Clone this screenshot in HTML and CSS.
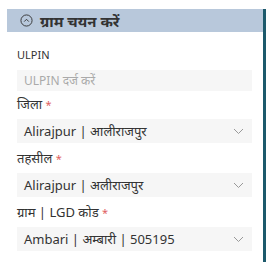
FILE: index.html
```html
<!DOCTYPE html>
<html lang="hi">
<head>
  <meta charset="UTF-8">
  <title>ग्राम चयन</title>
  <link rel="stylesheet" href="styles.css">
</head>
<body>

<div class="panel">
  <!-- Header -->
  <div class="panel-head">
    <svg class="head-icon" width="13" height="13" viewBox="0 0 14 14">
      <circle cx="7" cy="7" r="6" fill="none" stroke="#333" stroke-width="1"/>
      <path d="M4.5 8.2 L7 5.7 L9.5 8.2" fill="none" stroke="#333" stroke-width="1"/>
    </svg>
    <span>ग्राम चयन करें</span>
  </div>

  <div class="panel-body">
    <div class="field field-first">
      <label class="lbl lbl-small">ULPIN</label>
      <input class="inp" type="text" placeholder="ULPIN दर्ज करें">
    </div>

    <div class="field">
      <label class="lbl">जिला <span class="req">*</span></label>
      <div class="sel">
        <span>Alirajpur | आलीराजपुर</span>
        <svg class="chev" width="11" height="7" viewBox="0 0 11 7"><path d="M1 1 L5.5 5.5 L10 1" fill="none" stroke="#999" stroke-width="1"/></svg>
      </div>
    </div>

    <div class="field">
      <label class="lbl">तहसील <span class="req">*</span></label>
      <div class="sel">
        <span>Alirajpur | अलीराजपुर</span>
        <svg class="chev" width="11" height="7" viewBox="0 0 11 7"><path d="M1 1 L5.5 5.5 L10 1" fill="none" stroke="#999" stroke-width="1"/></svg>
      </div>
    </div>

    <div class="field">
      <label class="lbl">ग्राम | LGD कोड <span class="req">*</span></label>
      <div class="sel">
        <span>Ambari | अम्बारी | 505195</span>
        <svg class="chev" width="11" height="7" viewBox="0 0 11 7"><path d="M1 1 L5.5 5.5 L10 1" fill="none" stroke="#999" stroke-width="1"/></svg>
      </div>
    </div>
  </div>
</div>

</body>
</html>
```

FILE: styles.css
```css
* {
  box-sizing: border-box;
  font-family: "Noto Sans", sans-serif;
}
body {
  margin: 0;
  background-color: #fff;
  width: 272px;
  height: 265px;
  overflow: hidden;
}
.panel {
  margin: 9px 0 0 7px;
  width: 259px;
  height: 253px;
  border-right: 3px solid #1d5a6c;
}
.panel-head {
  height: 23px;
  background-color: #b8c8db;
  display: flex;
  align-items: center;
  gap: 7px;
  padding-left: 13px;
  font-size: 15px;
  font-weight: bold;
  color: #333;
}
.head-icon {
  flex-shrink: 0;
}
.panel-body {
  padding: 14px 11px 0 10px;
}
.field {
  margin-bottom: 6px;
}
.field-first {
  margin-bottom: 4px;
}
.lbl {
  display: block;
  font-size: 13px;
  color: #333;
  margin-bottom: 5px;
  line-height: 18px;
}
.lbl-small {
  font-size: 11px;
  margin-bottom: 6px;
}
.req {
  color: #e06060;
  font-size: 11px;
}
.inp {
  display: block;
  width: 100%;
  height: 21px;
  border: none;
  background-color: #f6f6f6;
  padding: 0 7px;
  font-size: 12px;
  outline: none;
}
.inp::placeholder {
  color: #aaa;
}
.sel {
  display: flex;
  align-items: center;
  justify-content: space-between;
  height: 24px;
  background-color: #f6f6f6;
  padding: 0 8px 0 7px;
  font-size: 13px;
  color: #333;
}
```
